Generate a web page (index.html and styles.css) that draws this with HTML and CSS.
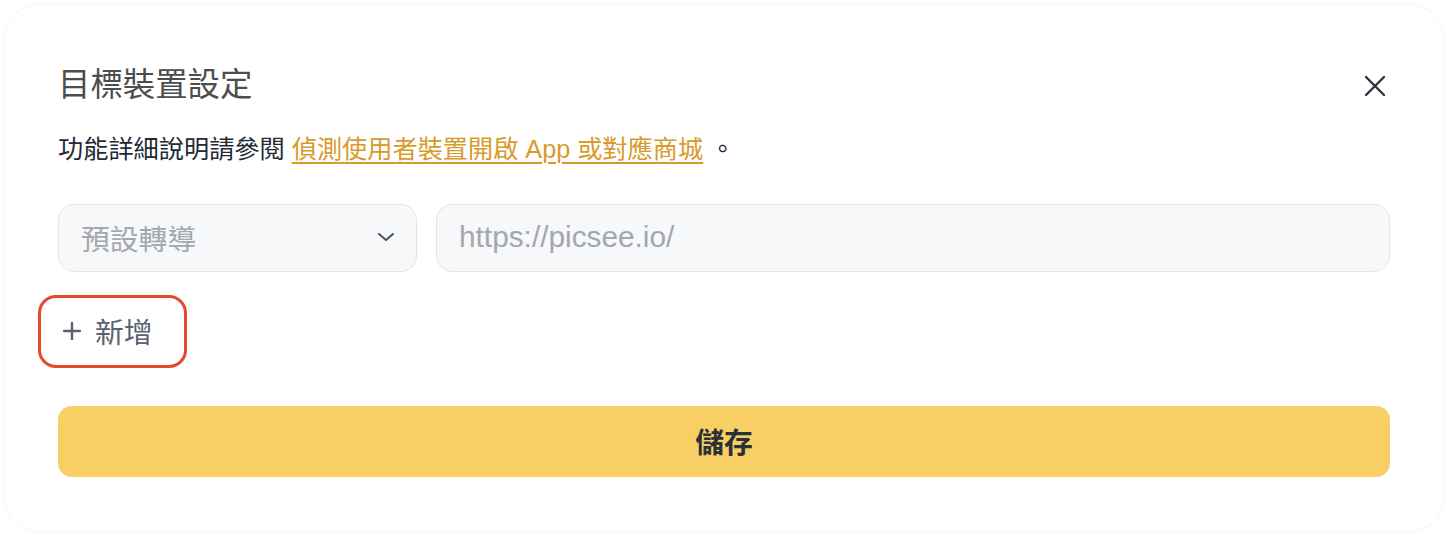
FILE: index.html
```html
<!DOCTYPE html>
<html lang="zh-Hant">
<head>
    <meta charset="UTF-8">
    <meta name="viewport" content="width=device-width, initial-scale=1.0">
    <title>目標裝置設定</title>
    <link rel="stylesheet" href="styles.css">
</head>
<body>
    <div class="modal">
        <div class="modal-header">
            <h2 class="modal-title">目標裝置設定</h2>
            <button class="close-btn" aria-label="關閉">
                <svg width="22" height="22" viewBox="0 0 22 22" fill="none" stroke="currentColor" stroke-width="2.4" stroke-linecap="round">
                    <path d="M2 2 L20 20 M20 2 L2 20"/>
                </svg>
            </button>
        </div>
        <p class="desc">功能詳細說明請參閱 <a href="#" class="doc-link">偵測使用者裝置開啟 App 或對應商城</a> 。</p>

        <div class="rule-row">
            <div class="select-box">
                <span class="placeholder">預設轉導</span>
                <svg width="18" height="10" viewBox="0 0 18 10" fill="none" stroke="currentColor" stroke-width="2" stroke-linecap="round" stroke-linejoin="round">
                    <path d="M2 2 L9 8 L16 2"/>
                </svg>
            </div>
            <input class="url-input" type="text" placeholder="https://picsee.io/">
        </div>

        <div class="add-row">
            <button class="add-btn">
                <svg width="18" height="18" viewBox="0 0 18 18" fill="none" stroke="currentColor" stroke-width="2.4" stroke-linecap="round">
                    <path d="M9 1 V17 M1 9 H17"/>
                </svg>
                新增
            </button>
        </div>

        <button class="save-btn">儲存</button>
    </div>
</body>
</html>
```

FILE: styles.css
```css
body {
    margin: 0;
    padding: 4px;
    background: #ffffff;
    font-family: "Liberation Sans", "Noto Sans CJK TC", sans-serif;
}
.modal {
    box-sizing: border-box;
    width: 1440px;
    height: 528px;
    background: #ffffff;
    border-radius: 36px;
    box-shadow: 0 0 0 1px rgba(0, 0, 0, 0.035);
    padding: 59px 54px 0 54px;
}
.modal-header {
    display: flex;
    justify-content: space-between;
    align-items: center;
    height: 45px;
}
.modal-title {
    margin: 0;
    font-size: 32.4px;
    font-weight: normal;
    color: #4d4d4d;
    line-height: 45px;
}
.close-btn {
    background: none;
    border: none;
    padding: 0;
    margin-right: 4px;
    color: #2d3340;
    display: flex;
    cursor: pointer;
}
.desc {
    margin: 22px 0 0 0;
    font-size: 25.2px;
    line-height: 38px;
    color: #242a35;
}
.doc-link {
    color: #d99a2c;
    text-decoration: underline;
    text-decoration-thickness: 2px;
    text-underline-offset: 4px;
}
.rule-row {
    display: flex;
    gap: 19px;
    margin-top: 36px;
}
.select-box {
    box-sizing: border-box;
    width: 359px;
    height: 68px;
    display: flex;
    align-items: center;
    justify-content: space-between;
    padding: 0 21px 2px 22px;
    background: #f7f8fa;
    border: 1px solid #e1e4e9;
    border-radius: 16px;
    color: #4a5261;
}
.placeholder {
    font-size: 28.8px;
    color: #a3a7ae;
}
.url-input {
    box-sizing: border-box;
    flex: 1;
    height: 68px;
    padding: 0 22px 2px 22px;
    background: #f7f8fa;
    border: 1px solid #e1e4e9;
    border-radius: 16px;
    font-family: inherit;
    font-size: 29.8px;
    outline: none;
}
.url-input::placeholder {
    color: #a3a7ae;
}
.add-row {
    margin-top: 23px;
    margin-left: -20px;
}
.add-btn {
    box-sizing: border-box;
    height: 73px;
    width: 149px;
    display: flex;
    align-items: center;
    gap: 14px;
    padding: 0 0 2px 22px;
    background: #ffffff;
    border: 3.5px solid #e9472b;
    border-radius: 18px;
    font-family: inherit;
    font-size: 28.8px;
    color: #5a6270;
    cursor: pointer;
}
.save-btn {
    display: block;
    width: 100%;
    height: 71px;
    margin-top: 38px;
    padding-bottom: 3px;
    background: #f7cf64;
    border: none;
    border-radius: 14px;
    font-family: inherit;
    font-size: 28.8px;
    font-weight: bold;
    color: #2b3038;
    cursor: pointer;
}
```
